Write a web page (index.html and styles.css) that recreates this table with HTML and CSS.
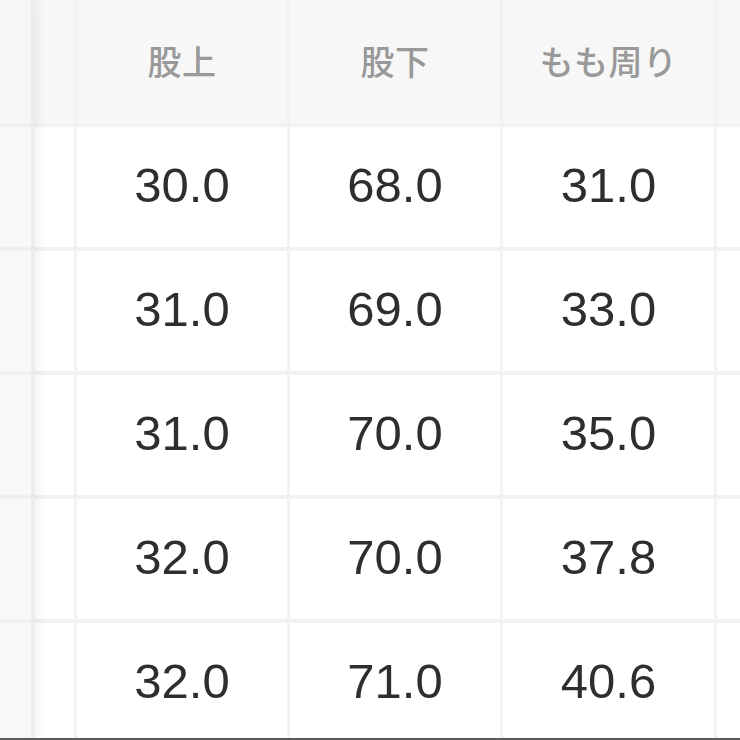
FILE: index.html
```html
<!DOCTYPE html>
<html lang="ja">
<head>
<meta charset="utf-8">
<link rel="stylesheet" href="styles.css">
</head>
<body>
<div class="frame">
  <div class="table">
    <div class="cell head"></div>
    <div class="cell head">股上</div>
    <div class="cell head">股下</div>
    <div class="cell head">もも周り</div>
    <div class="cell head"></div>

    <div class="cell"></div>
    <div class="cell">30.0</div>
    <div class="cell">68.0</div>
    <div class="cell">31.0</div>
    <div class="cell"></div>

    <div class="cell"></div>
    <div class="cell">31.0</div>
    <div class="cell">69.0</div>
    <div class="cell">33.0</div>
    <div class="cell"></div>

    <div class="cell"></div>
    <div class="cell">31.0</div>
    <div class="cell">70.0</div>
    <div class="cell">35.0</div>
    <div class="cell"></div>

    <div class="cell"></div>
    <div class="cell">32.0</div>
    <div class="cell">70.0</div>
    <div class="cell">37.8</div>
    <div class="cell"></div>

    <div class="cell"></div>
    <div class="cell">32.0</div>
    <div class="cell">71.0</div>
    <div class="cell">40.6</div>
    <div class="cell"></div>
  </div>
  <div class="sticky">
    <div class="scell shead"></div>
    <div class="scell"></div>
    <div class="scell"></div>
    <div class="scell"></div>
    <div class="scell"></div>
    <div class="scell"></div>
  </div>
</div>
</body>
</html>
```

FILE: styles.css
```css
html, body {
  margin: 0;
  padding: 0;
  background: #ffffff;
}

.frame {
  position: relative;
  width: 740px;
  height: 738px;
  overflow: hidden;
  border-bottom: 2px solid #5a5a5a;
  background: #f2f2f2;
}

.table {
  display: grid;
  grid-template-columns: 74px 210px 210px 211px 210px;
  grid-template-rows: 123px 120px 120px 120px 120px 120px;
  column-gap: 3px;
  row-gap: 4px;
  background: #f2f2f2;
}

.cell {
  background: #ffffff;
  display: flex;
  align-items: center;
  justify-content: center;
  font-family: "Liberation Sans", Arial, "Noto Sans CJK JP", sans-serif;
  font-size: 49px;
  color: #2e2e2e;
  padding-bottom: 5px;
  box-sizing: border-box;
}

.cell.head {
  background: #f7f7f7;
  font-family: "Noto Sans CJK JP", sans-serif;
  font-size: 34px;
  font-weight: 500;
  color: #999999;
  letter-spacing: 0.5px;
  padding-bottom: 2px;
}

.sticky {
  position: absolute;
  top: 0;
  left: 0;
  width: 31px;
  height: 738px;
  display: grid;
  grid-template-rows: 123px 120px 120px 120px 120px 120px;
  row-gap: 4px;
  background: #f0f0f0;
  border-right: 3px solid #ececec;
  box-shadow: 4px 0 10px rgba(0, 0, 0, 0.06);
}

.scell {
  background: #f8f8f8;
}

.shead {
  background: #f6f6f6;
}
```
